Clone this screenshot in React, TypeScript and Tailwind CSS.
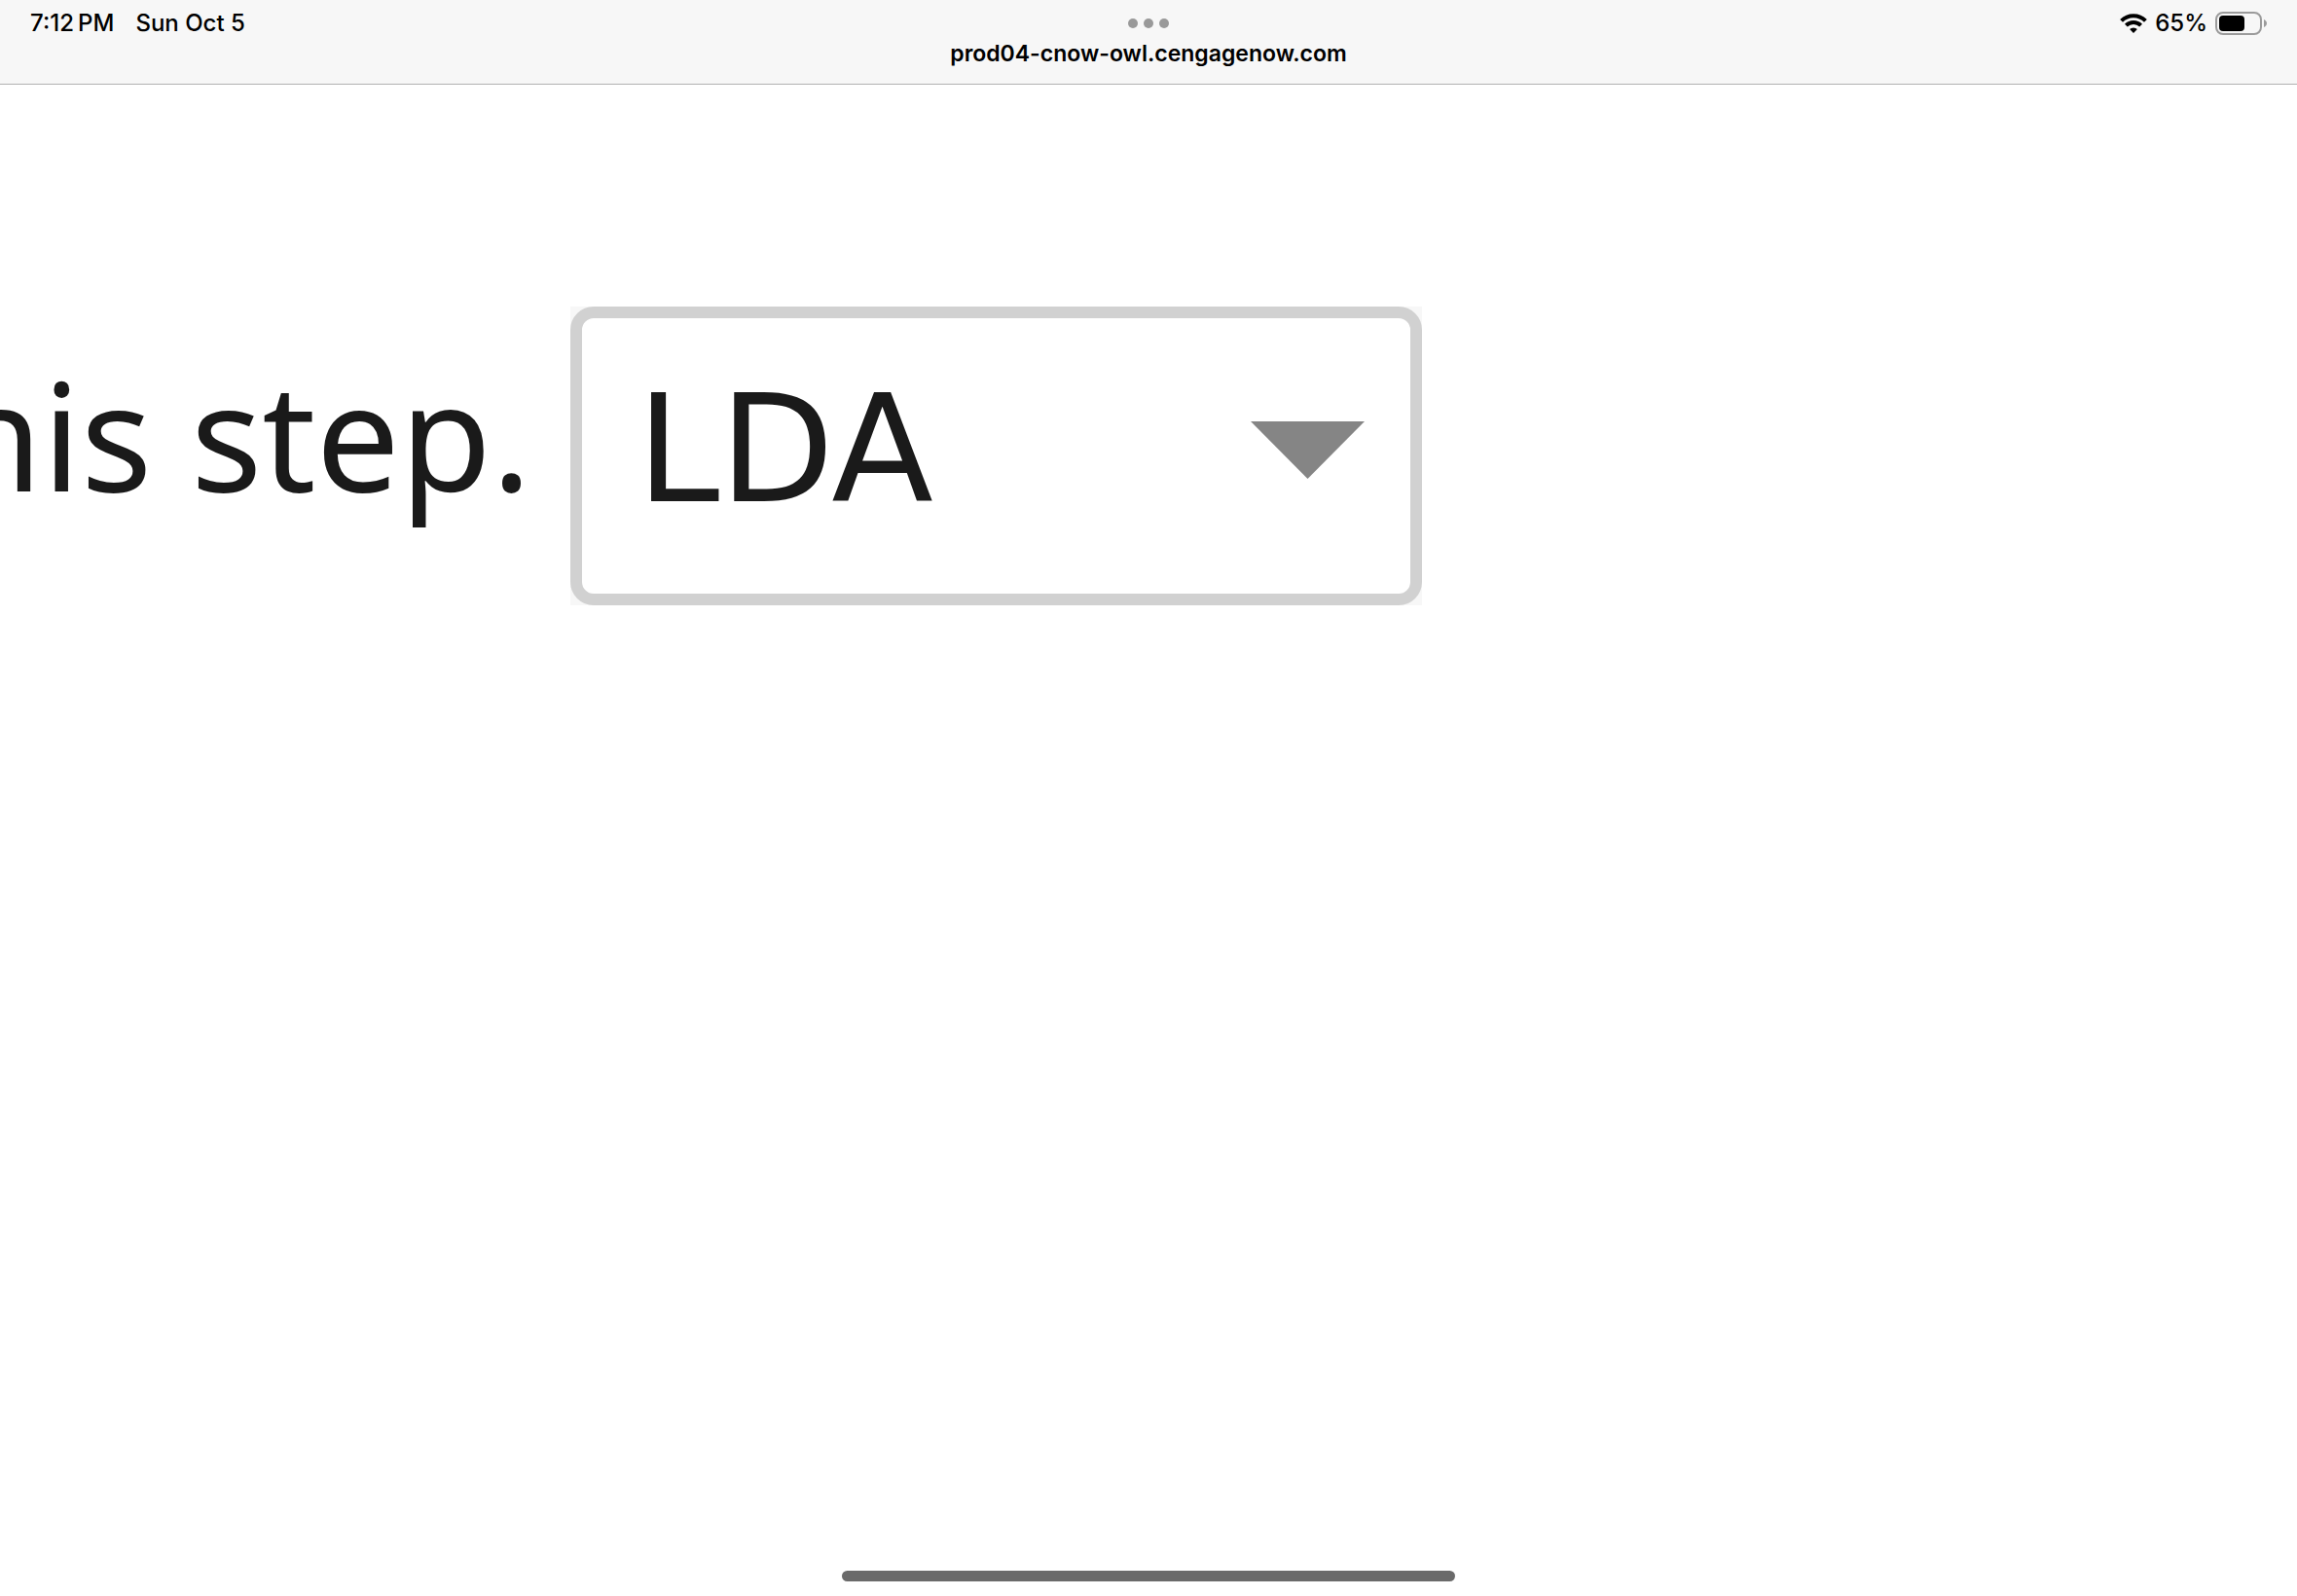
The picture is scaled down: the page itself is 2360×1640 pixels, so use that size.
import { useState } from 'react';

const STEP_OPTIONS = ['LDA', 'NaOEt', 'PCC', 'H3O+'];

function WifiIcon() {
  return (
    <svg width="28" height="20" viewBox="0 0 28 20" fill="none" stroke="#000" strokeWidth="4" aria-hidden="true">
      <path d="M1.6 7.4a17.5 17.5 0 0 1 24.8 0" />
      <path d="M6.4 12.2a10.8 10.8 0 0 1 15.2 0" />
      <path d="M14 20l-3.9-4a5.6 5.6 0 0 1 7.8 0z" fill="#000" stroke="none" />
    </svg>
  );
}

function BatteryIcon() {
  return (
    <svg width="53" height="24" viewBox="0 0 53 24" aria-hidden="true">
      <rect x="1" y="1" width="46" height="22" rx="7" fill="none" stroke="#9b9b9b" strokeWidth="2" />
      <rect x="4" y="4" width="26" height="16" rx="4" fill="#000" />
      <path d="M50 8v8c1.8-.8 3-2.3 3-4s-1.2-3.2-3-4z" fill="#9b9b9b" />
    </svg>
  );
}

function StatusBar() {
  return (
    <header className="grid grid-cols-3 items-start border-b border-[#b2b2b2] bg-[#f7f7f7] px-[31px] pt-2 pb-4 font-['Inter',sans-serif] text-2xl text-black">
      <div className="flex h-8 items-center gap-[22px] font-medium">
        <span>7:12&#8201;PM</span>
        <span>Sun Oct 5</span>
      </div>

      <div className="flex flex-col items-center">
        <button type="button" aria-label="Multitasking" className="flex h-8 items-center gap-1.5">
          <span className="size-2.5 rounded-full bg-[#999]" />
          <span className="size-2.5 rounded-full bg-[#999]" />
          <span className="size-2.5 rounded-full bg-[#999]" />
        </button>
        <span className="text-[23px] leading-[30px] font-semibold">prod04-cnow-owl.cengagenow.com</span>
      </div>

      <div className="flex h-8 items-center justify-end gap-2 font-medium">
        <WifiIcon />
        <span>65%</span>
        <BatteryIcon />
      </div>
    </header>
  );
}

export default function App() {
  const [reagent, setReagent] = useState('LDA');

  return (
    <div className="flex min-h-screen flex-col overflow-hidden bg-white">
      <StatusBar />

      <main className="flex flex-1 items-start pt-[228px] text-[153px] leading-[214px] text-[#1a1a1a]">
        {/* zoomed in, so the start of the sentence runs off the left edge */}
        <div className="flex w-[586px] shrink-0 justify-end pt-6 pr-10">
          <label htmlFor="reagent" className="font-['Noto_Sans',sans-serif] whitespace-nowrap">
            this step.
          </label>
        </div>

        <div className="relative bg-[#f7f7f7]">
          <select
            id="reagent"
            value={reagent}
            onChange={(e) => setReagent(e.target.value)}
            className="block h-[307px] w-[875px] appearance-none rounded-3xl border-12 border-[#d1d1d1] bg-white pb-3.5 pl-14 font-['DejaVu_Sans',sans-serif]"
          >
            {STEP_OPTIONS.map((option) => (
              <option key={option} value={option}>
                {option}
              </option>
            ))}
          </select>
          <svg
            width="117"
            height="59"
            viewBox="0 0 117 59"
            className="pointer-events-none absolute top-[118px] right-[59px]"
            aria-hidden="true"
          >
            <path d="M0 0h117L58.5 59z" fill="#858585" />
          </svg>
        </div>
      </main>

      <footer className="flex justify-center pb-[15px]">
        <div className="h-[11px] w-[630px] rounded-full bg-[#6a6a6a]" />
      </footer>
    </div>
  );
}
